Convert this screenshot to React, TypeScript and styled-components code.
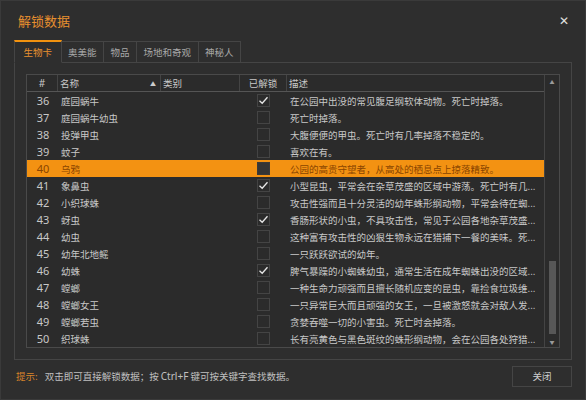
import React from "react";
import styled, { createGlobalStyle } from "styled-components";

const Global = createGlobalStyle`
  html, body { margin: 0; padding: 0; background: #2d2d2d; }
  body { font-family: "Noto Sans CJK SC", "Noto Sans", sans-serif; }
`;

const FONT = `"Segoe UI", "Noto Sans", "Noto Sans CJK SC", sans-serif`;
const ORANGE = "#f2920f";

const Window = styled.div`
  width: 586px;
  height: 400px;
  box-sizing: border-box;
  background: #2e2e2e;
  border: 1px solid #3a3a3a;
  display: flex;
  flex-direction: column;
  overflow: hidden;
  font-family: "Noto Sans CJK SC", sans-serif;
  color: #c8c8c8;
`;

const TitleBar = styled.div`
  height: 39px;
  display: flex;
  align-items: center;
  justify-content: space-between;
  padding: 0 16px 0 17px;
`;

const Title = styled.div`
  color: #e8902e;
  font-size: 13px;
`;

const CloseX = styled.div`
  color: #e0e0e0;
  font-size: 12px;
  font-family: "DejaVu Sans", sans-serif;
  line-height: 1;
`;

const Body = styled.div`
  margin: 0 13px;
  display: flex;
  flex-direction: column;
`;

const TabRow = styled.div`
  display: flex;
  height: 23px;
  align-items: flex-end;
  position: relative;
  z-index: 1;
  margin-bottom: -1px;
`;

const Tab = styled.div<{ $active?: boolean }>`
  height: ${(p) => (p.$active ? "23px" : "22px")};
  box-sizing: border-box;
  padding: ${(p) => (p.$active ? "0 8.5px" : "0 6.5px")};
  display: flex;
  align-items: center;
  font-size: 9.5px;
  color: ${(p) => (p.$active ? "#e8902e" : "#a8a8a8")};
  border: 1px solid #454545;
  border-top: ${(p) => (p.$active ? `2px solid ${ORANGE}` : "1px solid #454545")};
  border-bottom: ${(p) => (p.$active ? "1px solid #2e2e2e" : "1px solid #454545")};
  border-left: ${(p) => (p.$active ? "1px solid #454545" : "none")};
  background: #2e2e2e;
`;

const Panel = styled.div`
  height: 298px;
  box-sizing: border-box;
  border: 1px solid #454545;
  padding: 11px 11px 10px 11px;
`;

const Table = styled.div`
  height: 274px;
  box-sizing: border-box;
  border: 1px solid #4a4a4a;
  background: #2b2b2b;
  display: flex;
`;

const Main = styled.div`
  flex: 1;
  display: flex;
  flex-direction: column;
  overflow: hidden;
`;

const cols = "31px 103px 79px 47px 1fr";

const HeaderRow = styled.div`
  display: grid;
  grid-template-columns: ${cols};
  height: 18px;
  box-sizing: border-box;
  border-bottom: 1px solid #555;
  font-size: 9.5px;
  color: #c8c8c8;
`;

const HeadCell = styled.div<{ $align?: string; $last?: boolean }>`
  display: flex;
  align-items: center;
  justify-content: ${(p) => p.$align || "flex-start"};
  padding: 0 2px;
  border-right: ${(p) => (p.$last ? "none" : "1px solid #444")};
  white-space: nowrap;
  overflow: hidden;
`;

const SortArrow = styled.span`
  margin-left: auto;
  margin-right: 2px;
  font-size: 6px;
  color: #ccc;
`;

const Row = styled.div<{ $sel?: boolean }>`
  display: grid;
  grid-template-columns: ${cols};
  height: 17px;
  flex-shrink: 0;
  background: ${(p) => (p.$sel ? "#f39212" : "transparent")};
  color: ${(p) => (p.$sel ? "#8a4500" : "#c8c8c8")};
  font-size: 9.5px;
`;

const NumCell = styled.div`
  display: flex;
  align-items: center;
  justify-content: center;
  font-family: ${FONT};
  font-size: 11px;
  padding-left: 1px;
`;

const Cell = styled.div`
  display: flex;
  align-items: center;
  padding-left: 3px;
  white-space: nowrap;
  overflow: hidden;
`;

const CheckCell = styled.div`
  display: flex;
  align-items: center;
  justify-content: center;
`;

const Box = styled.div<{ $sel?: boolean }>`
  width: 11px;
  height: 11px;
  border: 1px solid ${(p) => (p.$sel ? "#3a3a3a" : "#444")};
  background: ${(p) => (p.$sel ? "#353535" : "transparent")};
  display: flex;
  align-items: center;
  justify-content: center;
`;

const ScrollBar = styled.div`
  width: 14px;
  border-left: 1px solid #444;
  display: flex;
  flex-direction: column;
  align-items: center;
  background: #2b2b2b;
`;

const Arrow = styled.div`
  height: 12px;
  display: flex;
  align-items: center;
  justify-content: center;
  color: #9a9a9a;
  font-size: 5px;
`;

const Thumb = styled.div`
  margin-top: auto;
  width: 7px;
  height: 73px;
  background: #575757;
  margin-bottom: 1px;
`;

const Footer = styled.div`
  height: 32px;
  display: flex;
  align-items: center;
  padding: 0 13px 0 15px;
  font-size: 9.5px;
`;

const Hint = styled.span`
  color: #d9852a;
  margin-right: 7px;
`;

const HintText = styled.span`
  color: #c0c0c0;
`;

const Latin = styled.span`
  font-family: ${FONT};
  font-size: 10px;
`;

const CloseButton = styled.div`
  margin-left: auto;
  width: 60px;
  height: 21px;
  box-sizing: border-box;
  border: 1px solid #454545;
  display: flex;
  align-items: center;
  justify-content: center;
  color: #d0d0d0;
  font-size: 9.5px;
`;

const Check = () => (
  <svg width="11" height="11" viewBox="0 0 11 11">
    <polyline points="1.5,5.8 4.2,8.3 9.5,2.2" fill="none" stroke="#e6e6e6" strokeWidth="1.3" />
  </svg>
);

type Item = { n: number; name: string; ok: boolean; desc: string };

const items: Item[] = [
  { n: 36, name: "庭园蜗牛", ok: true, desc: "在公园中出没的常见腹足纲软体动物。死亡时掉落。" },
  { n: 37, name: "庭园蜗牛幼虫", ok: false, desc: "死亡时掉落。" },
  { n: 38, name: "投弹甲虫", ok: false, desc: "大腹便便的甲虫。死亡时有几率掉落不稳定的。" },
  { n: 39, name: "蚊子", ok: false, desc: "喜欢在有。" },
  { n: 40, name: "乌鸦", ok: false, desc: "公园的高贵守望者，从高处的栖息点上掠落精致。" },
  { n: 41, name: "象鼻虫", ok: true, desc: "小型昆虫，平常会在杂草茂盛的区域中游荡。死亡时有几..." },
  { n: 42, name: "小织球蛛", ok: false, desc: "攻击性强而且十分灵活的幼年蛛形纲动物，平常会待在蜘..." },
  { n: 43, name: "蚜虫", ok: true, desc: "香肠形状的小虫，不具攻击性，常见于公园各地杂草茂盛..." },
  { n: 44, name: "幼虫", ok: false, desc: "这种富有攻击性的凶狠生物永远在猎捕下一餐的美味。死..." },
  { n: 45, name: "幼年北地鳐", ok: false, desc: "一只跃跃欲试的幼年。" },
  { n: 46, name: "幼蛛", ok: true, desc: "脾气暴躁的小蜘蛛幼虫，通常生活在成年蜘蛛出没的区域..." },
  { n: 47, name: "螳螂", ok: false, desc: "一种生命力顽强而且擅长随机应变的昆虫，靠捡食垃圾维..." },
  { n: 48, name: "螳螂女王", ok: false, desc: "一只异常巨大而且顽强的女王，一旦被激怒就会对敌人发..." },
  { n: 49, name: "螳螂若虫", ok: false, desc: "贪婪吞噬一切的小害虫。死亡时会掉落。" },
  { n: 50, name: "织球蛛", ok: false, desc: "长有亮黄色与黑色斑纹的蛛形纲动物，会在公园各处狩猎..." },
];

const tabs = ["生物卡", "奥美能", "物品", "场地和奇观", "神秘人"];

export default function App() {
  return (
    <>
      <Global />
      <Window>
        <TitleBar>
          <Title>解锁数据</Title>
          <CloseX>✕</CloseX>
        </TitleBar>
        <Body>
          <TabRow>
            {tabs.map((t, i) => (
              <Tab key={t} $active={i === 0}>
                {t}
              </Tab>
            ))}
          </TabRow>
          <Panel>
            <Table>
              <Main>
                <HeaderRow>
                  <HeadCell $align="center">
                    <Latin>#</Latin>
                  </HeadCell>
                  <HeadCell>
                    名称<SortArrow>▲</SortArrow>
                  </HeadCell>
                  <HeadCell>类别</HeadCell>
                  <HeadCell $align="center">已解锁</HeadCell>
                  <HeadCell $last>描述</HeadCell>
                </HeaderRow>
                {items.map((it) => {
                  const sel = it.n === 40;
                  return (
                    <Row key={it.n} $sel={sel}>
                      <NumCell>{it.n}</NumCell>
                      <Cell>{it.name}</Cell>
                      <Cell />
                      <CheckCell>
                        <Box $sel={sel}>{it.ok && <Check />}</Box>
                      </CheckCell>
                      <Cell>{it.desc}</Cell>
                    </Row>
                  );
                })}
              </Main>
              <ScrollBar>
                <Arrow>▲</Arrow>
                <Thumb />
                <Arrow>▼</Arrow>
              </ScrollBar>
            </Table>
          </Panel>
        </Body>
        <Footer>
          <Hint>提示:</Hint>
          <HintText>
            双击即可直接解锁数据；按 <Latin>Ctrl+F</Latin> 键可按关键字查找数据。
          </HintText>
          <CloseButton>关闭</CloseButton>
        </Footer>
      </Window>
    </>
  );
}
